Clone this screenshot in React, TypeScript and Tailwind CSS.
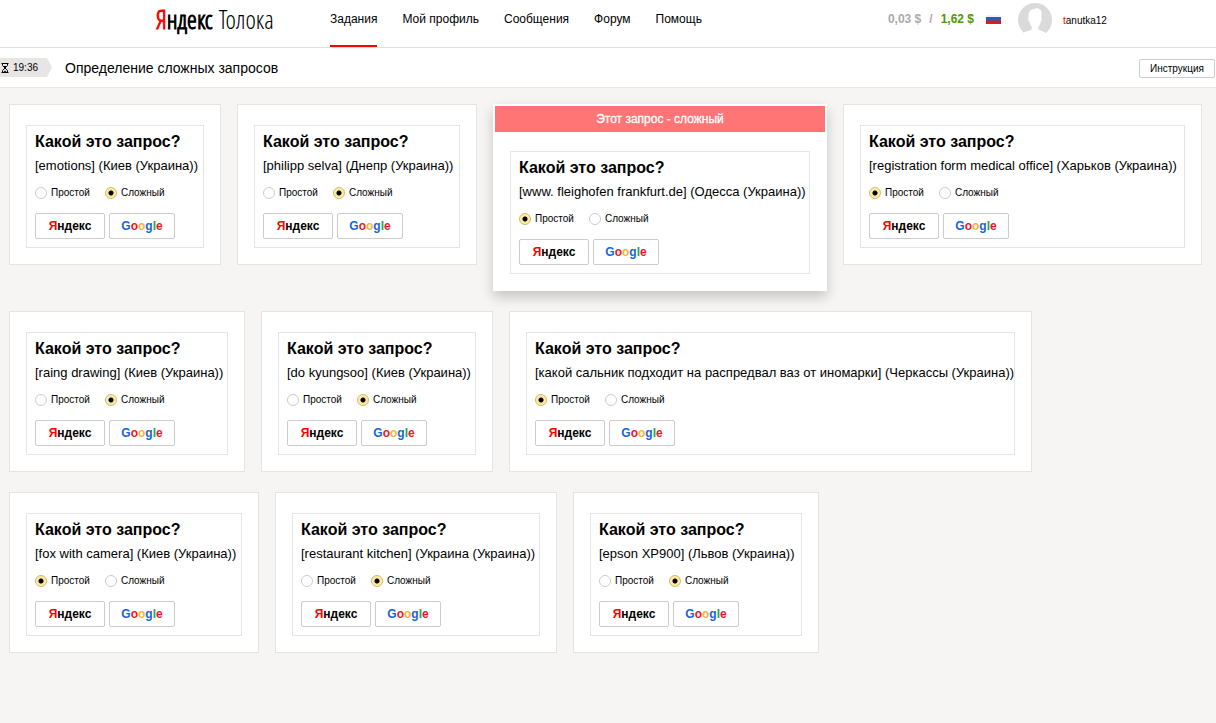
import { useState } from "react";

type Answer = "simple" | "hard";

type Task = { id: string; query: string; answer: Answer; width: string; notice?: string };

const tasks: Task[] = [
  { id: "t1", query: "[emotions] (Киев (Украина))", answer: "hard", width: "w-[212px]" },
  { id: "t2", query: "[philipp selva] (Днепр (Украина))", answer: "hard", width: "w-[240px]" },
  {
    id: "t3",
    query: "[www. fleighofen frankfurt.de] (Одесса (Украина))",
    answer: "simple",
    width: "w-[334px]",
    notice: "Этот запрос - сложный",
  },
  {
    id: "t4",
    query: "[registration form medical office] (Харьков (Украина))",
    answer: "simple",
    width: "w-[359px]",
  },
  { id: "t5", query: "[raing drawing] (Киев (Украина))", answer: "hard", width: "w-[236px]" },
  { id: "t6", query: "[do kyungsoo] (Киев (Украина))", answer: "hard", width: "w-[232px]" },
  {
    id: "t7",
    query: "[какой сальник подходит на распредвал ваз от иномарки] (Черкассы (Украина))",
    answer: "simple",
    width: "w-[523px]",
  },
  { id: "t8", query: "[fox with camera] (Киев (Украина))", answer: "simple", width: "w-[250px]" },
  {
    id: "t9",
    query: "[restaurant kitchen] (Украина (Украина))",
    answer: "hard",
    width: "w-[282px]",
  },
  { id: "t10", query: "[epson XP900] (Львов (Украина))", answer: "hard", width: "w-[246px]" },
];

const navItems = ["Задания", "Мой профиль", "Сообщения", "Форум", "Помощь"];

function Radio({
  name,
  label,
  checked,
  onSelect,
}: {
  name: string;
  label: string;
  checked: boolean;
  onSelect: () => void;
}) {
  return (
    <label className="flex items-center gap-1 text-[10px] leading-4">
      <input
        type="radio"
        name={name}
        checked={checked}
        onChange={onSelect}
        className="size-3 appearance-none rounded-full border border-[#ccc] bg-white checked:border-[#cdbb74] checked:bg-[radial-gradient(circle,#000_2px,#ffeba0_3px)]"
      />
      {label}
    </label>
  );
}

function TaskCard({ task }: { task: Task }) {
  const [answer, setAnswer] = useState<Answer>(task.answer);
  const frame = task.notice
    ? "border-2 border-white shadow-[0_6px_12px_rgba(0,0,0,0.2)]"
    : "border border-[#e5e4e2]";
  const body = task.notice ? "px-[15px] pt-[19px] pb-[15px]" : "px-4 pt-5 pb-4";

  return (
    <article className={`bg-white ${task.width} ${frame}`}>
      {task.notice && (
        <p className="bg-[#ff7575] text-center text-xs leading-[26px] text-white [-webkit-text-stroke:0.3px]">
          {task.notice}
        </p>
      )}
      <div className={body}>
        <div className="border border-[#e5e5e5] px-2 pt-1 pb-2">
          <h2 className="text-base leading-6 font-bold whitespace-nowrap">Какой это запрос?</h2>
          <p className="text-[13px] leading-6 whitespace-nowrap">{task.query}</p>
          <div className="flex h-[30px] items-center gap-[15px]">
            <Radio
              name={task.id}
              label="Простой"
              checked={answer === "simple"}
              onSelect={() => setAnswer("simple")}
            />
            <Radio
              name={task.id}
              label="Сложный"
              checked={answer === "hard"}
              onSelect={() => setAnswer("hard")}
            />
          </div>
          <div className="mt-[5px] flex gap-1 text-xs font-bold">
            <button
              type="button"
              className="h-[26px] w-[70px] rounded-xs border border-[#ccc] bg-white"
            >
              <span className="text-[#f00]">Я</span>ндекс
            </button>
            <button
              type="button"
              className="h-[26px] w-[66px] rounded-xs border border-[#ccc] bg-white"
            >
              <span className="text-[#1565d8]">G</span>
              <span className="text-[#f01428]">o</span>
              <span className="text-[#f5b335]">o</span>
              <span className="text-[#1565d8]">g</span>
              <span className="text-[#2ba24c]">l</span>
              <span className="text-[#f01428]">e</span>
            </button>
          </div>
        </div>
      </div>
    </article>
  );
}

function Header() {
  return (
    <header className="flex h-12 border-b border-[#e0e0e0] bg-white pl-[156px]">
      <a
        href="#home"
        className="flex w-[174px] items-baseline gap-1.5 font-['Open_Sans_Condensed_Light','Liberation_Sans_Narrow',sans-serif] text-[25px] leading-[38px] font-light"
      >
        <span className="[-webkit-text-stroke:1px]">
          <span className="text-[#f00]">Я</span>ндекс
        </span>
        <span>Толока</span>
      </a>
      <nav className="flex gap-[25px] text-xs leading-[38px]">
        {navItems.map((item, index) => (
          <a
            key={item}
            href={`#${item}`}
            className={index === 0 ? "h-[47px] border-b-2 border-[#f00]" : "h-[47px]"}
          >
            {item}
          </a>
        ))}
      </nav>
      <div className="mr-[106px] ml-auto flex h-10 items-center">
        <div className="flex items-center gap-2 pb-0.5 text-xs font-bold text-[#aaa]">
          <span>0,03 $</span>
          <span>/</span>
          <span className="text-[#4c9a00]">1,62 $</span>
          <svg viewBox="0 0 15 9" className="ml-1 h-[9px] w-[15px]" role="img" aria-label="Русский">
            <path fill="#f4f4f4" d="M0 0h15v3H0z" />
            <path fill="#1f62b8" d="M0 2h15v4H0z" />
            <path fill="#e4181c" d="M0 5.500h15V9H0z" />
          </svg>
        </div>
        <svg viewBox="0 0 34 34" className="ml-[17px] size-[34px]" aria-hidden="true">
          <circle cx="17" cy="17" r="17" fill="#dadada" />
          <path
            fill="#fff"
            d="M4 34l2-4.500c3-1.500 6-1.500 7.800-3.500l-.2-2.500c-1.200-1.500-1.900-3-2.200-5-1.400-.5-1.500-3-.7-4C9.800 9 12.500 6 16.500 6c1.500-1.500 2.500-.8 3.500-.5 3.500.5 4 4 3.300 9 .9 1 .5 3.500-.6 4-.3 2-1 3.600-2.200 5l-.2 2.500c1.700 2 5 2 7.500 4l3 4z"
          />
        </svg>
        <a href="#profile" className="ml-[11px] w-[47px] text-[10px]">
          <span className="text-[#f00]">t</span>anutka12
        </a>
      </div>
    </header>
  );
}

export default function App() {
  return (
    <div className="min-h-screen bg-[#f6f5f3] font-['Liberation_Sans',Arial,sans-serif] text-black">
      <Header />
      <div className="flex h-10 items-center border-b border-[#e8e8e8] bg-white pr-px">
        <div className="flex h-[19px] w-[52px] items-center gap-1 bg-[#e7e6e5] pl-px text-[10px] [clip-path:polygon(0_0,47px_0,52px_50%,47px_100%,0_100%)]">
          <svg
            viewBox="0 0 8 10"
            className="h-2.5 w-2"
            fill="none"
            stroke="#000"
            strokeWidth="1"
            aria-hidden="true"
          >
            <path d="M.5.500h7M.5 9.500h7M1.500 1v1.500L4 5l2.500-2.500V1M1.500 9V7.500L4 5l2.500 2.500V9" />
            <path fill="#000" stroke="none" d="M2 3h4L4 5zM2.500 9L4 7.500 5.500 9z" />
          </svg>
          <time>19:36</time>
        </div>
        <h1 className="ml-[13px] text-sm">Определение сложных запросов</h1>
        <button
          type="button"
          className="mt-0.5 ml-auto h-[19px] w-[76px] rounded-xs border border-[#ccc] bg-white text-[10px]"
        >
          Инструкция
        </button>
      </div>
      <main className="flex flex-wrap items-start gap-x-4 gap-y-5 px-[9px] pt-4">
        {tasks.map((task) => (
          <TaskCard key={task.id} task={task} />
        ))}
      </main>
    </div>
  );
}
